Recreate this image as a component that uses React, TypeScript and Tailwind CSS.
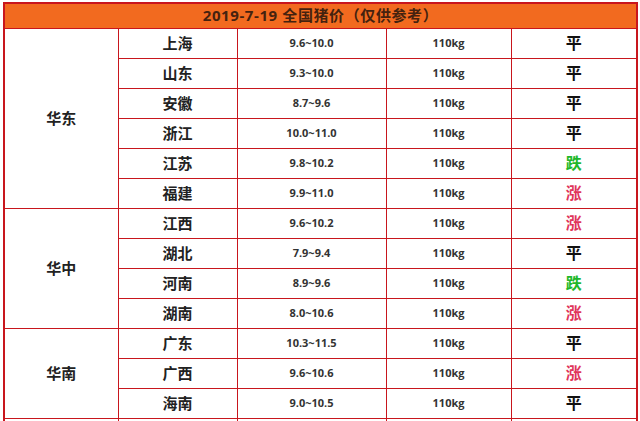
const rows: { region?: string; span?: number; prov: string; price: string; trend: string }[] = [
  { region: "华东", span: 6, prov: "上海", price: "9.6~10.0", trend: "平" },
  { prov: "山东", price: "9.3~10.0", trend: "平" },
  { prov: "安徽", price: "8.7~9.6", trend: "平" },
  { prov: "浙江", price: "10.0~11.0", trend: "平" },
  { prov: "江苏", price: "9.8~10.2", trend: "跌" },
  { prov: "福建", price: "9.9~11.0", trend: "涨" },
  { region: "华中", span: 4, prov: "江西", price: "9.6~10.2", trend: "涨" },
  { prov: "湖北", price: "7.9~9.4", trend: "平" },
  { prov: "河南", price: "8.9~9.6", trend: "跌" },
  { prov: "湖南", price: "8.0~10.6", trend: "涨" },
  { region: "华南", span: 3, prov: "广东", price: "10.3~11.5", trend: "平" },
  { prov: "广西", price: "9.6~10.6", trend: "涨" },
  { prov: "海南", price: "9.0~10.5", trend: "平" },
];

const trendColor: Record<string, string> = {
  平: "text-[#111]",
  涨: "text-[#e0355a]",
  跌: "text-[#1fb82a]",
};

const cell = "border border-[#c8161d] text-center p-0";

export default function App() {
  return (
    <div
      className="w-[640px] h-[421px] overflow-hidden bg-white pl-[3px] pt-[2px]"
      style={{ fontFamily: '"Open Sans", "Noto Sans CJK SC", sans-serif' }}
    >
      <table className="border-collapse table-fixed w-[633px] border-2 border-[#c8161d]">
        <colgroup>
          <col className="w-[114px]" />
          <col className="w-[119px]" />
          <col className="w-[149px]" />
          <col className="w-[125px]" />
          <col className="w-[126px]" />
        </colgroup>
        <thead>
          <tr className="h-[25px]">
            <th
              colSpan={5}
              className="bg-[#f26a1f] border border-[#c8161d] text-[#45220f] text-[15px] leading-none font-bold tracking-[0.6px] text-center"
            >
              2019-7-19 全国猪价（仅供参考）
            </th>
          </tr>
        </thead>
        <tbody>
          {rows.map((r) => (
            <tr key={r.prov} className="h-[30px]">
              {r.region && (
                <td rowSpan={r.span} className={`${cell} text-[15px] font-bold text-[#222]`}>
                  {r.region}
                </td>
              )}
              <td className={`${cell} text-[15px] font-bold text-[#222]`}>{r.prov}</td>
              <td className={`${cell} text-[11px] font-bold text-[#333]`}>{r.price}</td>
              <td className={`${cell} text-[11px] font-bold text-[#333]`}>110kg</td>
              <td className={`${cell} text-[16px] font-bold ${trendColor[r.trend]}`}>{r.trend}</td>
            </tr>
          ))}
          <tr className="h-[30px]">
            <td className={cell} />
            <td className={cell} />
            <td className={cell} />
            <td className={cell} />
            <td className={cell} />
          </tr>
        </tbody>
      </table>
    </div>
  );
}
